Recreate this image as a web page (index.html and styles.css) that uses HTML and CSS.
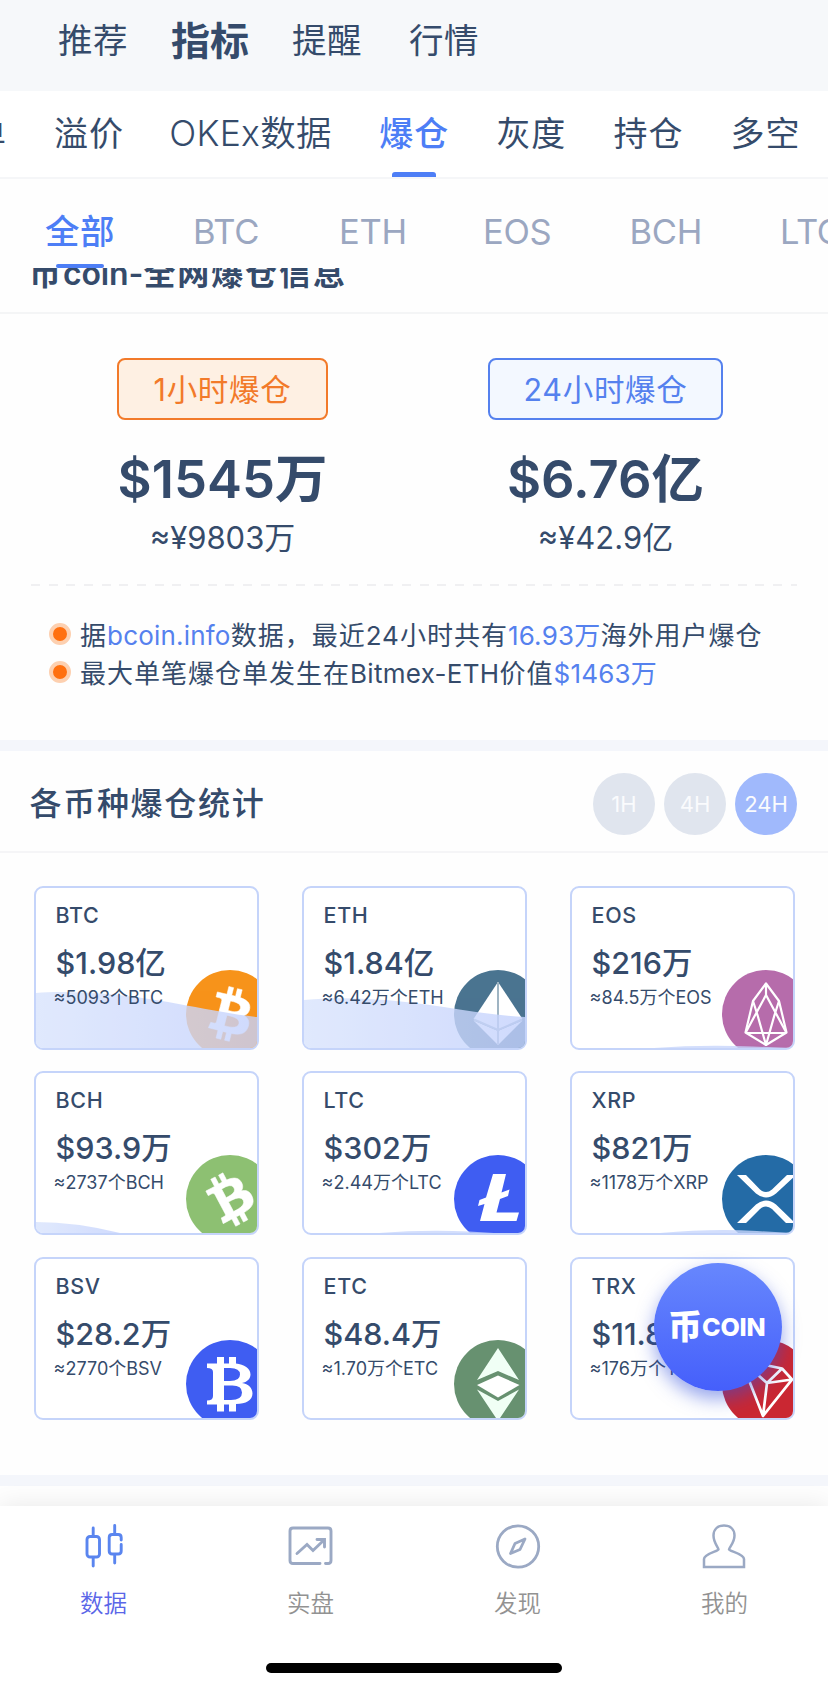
FILE: index.html
```html
<!DOCTYPE html>
<html lang="zh-CN">
<head>
<meta charset="utf-8">
<title>币coin</title>
<link rel="stylesheet" href="styles.css">
</head>
<body>
<svg class="defs" width="0" height="0">
  <defs>
    <linearGradient id="wave-fill" x1="0" x2="1"><stop offset="0" stop-color="#d9e4fd"/><stop offset=".5" stop-color="#cfdbfd"/><stop offset="1" stop-color="#c4d2fd"/></linearGradient>
    <path id="bitcoin" d="M23.189 14.02c.314-2.096-1.283-3.223-3.465-3.975l.708-2.84-1.728-.43-.69 2.765c-.454-.114-.92-.22-1.385-.326l.695-2.783L15.596 6l-.708 2.839c-.376-.086-.746-.17-1.104-.26l.002-.009-2.384-.595-.46 1.846s1.283.294 1.256.312c.7.175.826.638.805 1.006l-.806 3.235c.048.012.11.03.18.057l-.183-.045-1.13 4.532c-.086.212-.303.531-.793.41.018.025-1.256-.313-1.256-.313l-.858 1.978 2.25.561c.418.105.828.215 1.231.318l-.715 2.872 1.727.43.708-2.84c.472.127.93.245 1.378.357l-.706 2.828 1.728.43.715-2.866c2.948.558 5.164.333 6.097-2.333.752-2.146-.037-3.385-1.588-4.192 1.13-.26 1.98-1.003 2.207-2.538zm-3.95 5.538c-.533 2.147-4.148.986-5.32.695l.95-3.805c1.172.293 4.929.872 4.37 3.11zm.535-5.569c-.487 1.953-3.495.96-4.47.717l.86-3.45c.975.243 4.118.696 3.61 2.733z"/>
  </defs>
</svg>

<nav class="top-nav">
  <span>推荐</span><span class="on">指标</span><span>提醒</span><span>行情</span>
</nav>
<nav class="sub-nav">
  <span class="cut">单</span><span>溢价</span><span class="okex">OKEx数据</span><span class="on">爆仓</span><span>灰度</span><span>持仓</span><span>多空</span>
</nav>
<nav class="coin-nav">
  <span class="on">全部</span><span class="c-btc">BTC</span><span class="c-eth">ETH</span><span class="c-eos">EOS</span><span class="c-bch">BCH</span><span class="c-ltc">LTC</span>
</nav>

<main>
  <div class="clipped"><h2>币<span class="lat">coin-</span>全网爆仓信息</h2></div>

  <section class="summary">
    <div class="col">
      <span class="badge orange">1小时爆仓</span>
      <strong>$1545万</strong>
      <span class="cny">≈¥9803万</span>
    </div>
    <div class="col">
      <span class="badge blue">24小时爆仓</span>
      <strong>$6.76亿</strong>
      <span class="cny">≈¥42.9亿</span>
    </div>
  </section>
  <div class="dashes"></div>
  <ul class="notes">
    <li><i></i><span>据<b>bcoin.info</b>数据，最近24小时共有<b>16.93万</b>海外用户爆仓</span></li>
    <li><i></i><span>最大单笔爆仓单发生在<span class="lat">Bitmex-ETH</span>价值<b>$1463万</b></span></li>
  </ul>

  <div class="band"></div>
  <header class="stats-head">
    <h2>各币种爆仓统计</h2>
    <div class="periods"><span>1H</span><span>4H</span><span class="on">24H</span></div>
  </header>

  <section class="cards">
    <article>
      <svg class="coin" viewBox="0 0 88 88"><circle cx="44" cy="44" r="44" fill="#f7931a"/><use href="#bitcoin" transform="scale(2.75)" fill="#fff" stroke="#fff" stroke-width=".2"/></svg>
      <svg class="wave" viewBox="0 0 221 160"><path d="M0 105C20 103 45 104 72 106C130 111 175 124 221 129V160H0z" fill="url(#wave-fill)"/></svg>
      <h3>BTC</h3><strong>$1.98亿</strong><p>≈5093个BTC</p>
    </article>
    <article>
      <svg class="coin" viewBox="0 0 88 88"><circle cx="44" cy="44" r="44" fill="#4a7490"/><path d="M44 12 19.500 49 44 60 68.500 49z" fill="#fff"/><path d="M19.500 50.500 44 75 68.500 50.500 44 61z" fill="#fff"/><path d="M44 12V75M20 49.500 44 60 68 49.500" fill="none" stroke="#9fb5c3" stroke-width="2"/></svg>
      <svg class="wave" viewBox="0 0 221 160"><path d="M0 112C22 110 44 110 65 111C125 114 175 127 221 129V160H0z" fill="url(#wave-fill)"/></svg>
      <h3>ETH</h3><strong>$1.84亿</strong><p>≈6.42万个ETH</p>
    </article>
    <article>
      <svg class="coin" viewBox="0 0 88 88"><circle cx="44" cy="44" r="44" fill="#b66cab"/><g fill="none" stroke="#fff" stroke-width="2.200" stroke-linejoin="round"><path d="M44 13.500 31 31 23.500 62.500 44 75 64.500 62.500 57 31z"/><path d="M44 13.500V25M31 31 35.500 45M57 31 52.500 45M44 25 24 62M44 25 64 62M35.500 45 44 75 52.500 45M25 63H63"/></g></svg>
      <svg class="wave" viewBox="0 0 221 160"><path d="M82 160Q130 156.500 180 158.500L221 160z" fill="#c8d6fc"/></svg>
      <h3>EOS</h3><strong>$216万</strong><p>≈84.5万个EOS</p>
    </article>
    <article>
      <svg class="coin" viewBox="0 0 88 88"><circle cx="44" cy="44" r="44" fill="#8dc072"/><use href="#bitcoin" transform="rotate(-42 44 44) scale(2.75)" fill="#fff" stroke="#fff" stroke-width=".2"/></svg>
      <svg class="wave" viewBox="0 0 221 160"><path d="M0 149Q40 149 84 160H0z" fill="url(#wave-fill)"/></svg>
      <h3>BCH</h3><strong>$93.9万</strong><p>≈2737个BCH</p>
    </article>
    <article>
      <svg class="coin" viewBox="0 0 88 88"><circle cx="44" cy="44" r="44" fill="#3f5df2"/><path d="M39 19H52L47.500 37.500 55.500 34.500 54 41 46 44 42.500 57.500H65L62.500 66H26L30.500 49 24 51 25.500 45 32 42.500z" fill="#fff"/></svg>
      <svg class="wave" viewBox="0 0 221 160"><path d="M75 160Q120 156.500 165 158.500L190 160z" fill="#c8d6fc"/></svg>
      <h3>LTC</h3><strong>$302万</strong><p>≈2.44万个LTC</p>
    </article>
    <article>
      <svg class="coin" viewBox="0 0 88 88"><circle cx="44" cy="44" r="44" fill="#246ba6"/><path d="M15 20H24L38 34.500Q44 39.500 50 34.500L65 20H74L54 38.500Q44 46.500 34 38.500zM15 68H24L38 54Q44 49 50 54L64 68H73L54 49.500Q44 41.500 34 49.500z" fill="#fff"/></svg>
      <svg class="wave" viewBox="0 0 221 160"><path d="M88 160Q140 155.500 185 158L221 160z" fill="#c8d6fc"/></svg>
      <h3>XRP</h3><strong>$821万</strong><p>≈1178万个XRP</p>
    </article>
    <article>
      <svg class="coin" viewBox="0 0 88 88"><circle cx="44" cy="44" r="44" fill="#3f5df2"/><path fill="#fff" fill-rule="evenodd" d="M31 17H38V23.500H43V17H50V23.500C58 24.500 64.500 28 64.500 34.500C64.500 39 61 42 56 43C62.500 44 66.500 48 66.500 53.500C66.500 60 60 64 50 64V71.500H43V64.500H38V71.500H31V64.500H21V60.500Q27 60.500 27 56V32Q27 28 21 28V23.500H31zM38 28V41H44Q54 41 54 34.500T44 28zM38 45.500V60H45Q56 60 56 52.500T45 45.500z"/></svg>
      <h3>BSV</h3><strong>$28.2万</strong><p>≈2770个BSV</p>
    </article>
    <article>
      <svg class="coin" viewBox="0 0 88 88"><circle cx="44" cy="44" r="44" fill="#679170"/><path d="M44 8 65 40 44 31 23 40z" fill="#f0fff5"/><path d="M44 35.500 65.500 45 44 57.500 23 45z" fill="#fff"/><path d="M23 49.500 44 61 65 49.500 44 81z" fill="#f0fff5"/></svg>
      <h3>ETC</h3><strong>$48.4万</strong><p>≈1.70万个ETC</p>
    </article>
    <article>
      <svg class="coin" viewBox="0 0 88 88"><circle cx="44" cy="44" r="44" fill="#ca2732"/><path d="M19 20 60 28.500 70 39.500 41 76zM19 20 45 43 60 28.500M45 43 70 39.500M45 43 41 76" fill="none" stroke="#fff" stroke-width="2.700" stroke-linejoin="round"/></svg>
      <h3>TRX</h3><strong>$11.8万</strong><p>≈176万个TRX</p>
    </article>
  </section>
  <div class="band"></div>
</main>

<footer class="tab-bar">
  <div class="tabs">
    <div class="tab on">
      <svg viewBox="0 0 48 48" fill="none" stroke="#5a85ef" stroke-width="2.900" stroke-linecap="round"><rect x="7" y="13.500" width="12.500" height="20.500" rx="3"/><path d="M13.200 5v8M13.200 35v8M34.700 2.500v8M34.700 32v8M41.200 17v-2.500q0-3-3-3h-6q-3 0-3 3v13.500q0 3 3 3h6q3 0 3-3V21.500"/></svg>
      <span>数据</span>
    </div>
    <div class="tab">
      <svg viewBox="0 0 48 48" fill="none" stroke="#9ba9c4" stroke-width="2.900" stroke-linecap="round"><path d="M33 40.500H6q-3 0-3-3V8q0-3 3-3h35q3 0 3 3v29.500q0 3-3 3H38.500"/><path d="M10 30.500 20 21.500 26 27.500 37 17M30 16.500H37.500V24"/></svg>
      <span>实盘</span>
    </div>
    <div class="tab">
      <svg viewBox="0 0 48 48" fill="none" stroke="#9ba9c4" stroke-width="2.800"><circle cx="24" cy="23.500" r="20.700"/><path d="M31 16 21 20.500 16.500 30.500 26 26.500z" stroke-width="2.800" stroke-linejoin="round"/></svg>
      <span>发现</span>
    </div>
    <div class="tab">
      <svg viewBox="0 0 48 48" fill="none" stroke="#9ba9c4" stroke-width="2.500"><path d="M3 44V36C3 31 17.500 28 17.500 26.500C17.500 24.500 12.500 20 12.500 12.500C12.500 6 17 2.500 23 2.500S33.500 6 33.500 12.500C33.500 20 28 24.500 28 26.500C28 28 43 31 43 36V44z"/></svg>
      <span>我的</span>
    </div>
  </div>
  <div class="home-bar"></div>
</footer>

<div class="float-btn"><span class="bi">币</span><span class="coin-word">COIN</span></div>
</body>
</html>
```

FILE: styles.css
```css
* { box-sizing: border-box; margin: 0; padding: 0; }
body {
  width: 828px; height: 1682px; overflow: hidden; position: relative;
  display: flex; flex-direction: column;
  background: #fefefe; color: #354b6b;
  font-family: Inter, "Noto Sans CJK SC", sans-serif;
}
.defs { position: absolute; }
h2, h3, strong { font-weight: 500; }
nav { display: flex; flex: none; white-space: nowrap; font-weight: 390; }
nav span { flex: none; }

.top-nav { height: 91px; background: #f6f8fa; padding-left: 58px; font-size: 34.500px; letter-spacing: .5px; line-height: 81px; }
.top-nav span { width: 117px; }
.top-nav .on { font-size: 39px; font-weight: 700; letter-spacing: 0; margin-left: -4px; width: 121px; }

.sub-nav { height: 88px; border-bottom: 2px solid #f5f6f8; font-size: 34px; letter-spacing: 1px; line-height: 86px; margin-left: -28px; gap: 47.100px; background: #fff; }
.sub-nav .cut { margin-right: 0; width: 35px; }
.sub-nav .okex { width: 163px; margin-left: -2px; font-size: 35.500px; letter-spacing: .3px; font-weight: 360; }
.sub-nav .on, .coin-nav .on { color: #4d7ef6; font-weight: 500; display: flex; flex-direction: column; align-items: center; }
.sub-nav .on::after { content: ""; width: 44px; height: 5px; border-radius: 3px 3px 0 0; background: #4d7ef6; margin-top: -5px; }

.coin-nav { height: 89px; padding-left: 45px; font-size: 34.500px; line-height: 105px; color: #9ba7c1; letter-spacing: -.3px; background: #fefefe; overflow: hidden; }
.coin-nav .on { letter-spacing: .5px; width: 70px; }
.coin-nav .on::after { content: ""; width: 48px; height: 4.500px; border-radius: 3px; background: #4d7ef6; margin-top: -20.500px; }
.c-btc { margin-left: 78px; width: 146px; }
.c-eth { width: 144px; }
.c-eos { width: 146.500px; }
.c-bch { width: 150.500px; }

main { flex: none; height: 1218px; }
h2 { font-size: 32px; letter-spacing: 1.700px; }
.clipped { height: 46px; border-bottom: 2px solid #f4f5f6; overflow: hidden; display: flex; padding-left: 29px; }
.clipped h2 { line-height: 48px; margin-top: -18px; font-weight: 600; letter-spacing: 1.900px; }
.clipped .lat { letter-spacing: -.1px; }

.summary { height: 270px; padding: 44px 31px 0; display: grid; grid-template-columns: 1fr 1fr; }
.col { display: flex; flex-direction: column; align-items: center; }
.badge { height: 62px; line-height: 60px; border: 2px solid; border-radius: 8px; font-size: 30.500px; text-align: center; letter-spacing: .7px; font-weight: 390; }
.orange { width: 211px; color: #f27a2a; background: #fef0e3; }
.blue { width: 235px; color: #5581ee; background: #f3f8ff; }
.col strong { font-size: 52.500px; line-height: 62px; margin-top: 28px; font-weight: 600; }
.cny { font-size: 31px; line-height: 40px; margin-top: 8px; font-weight: 390; }
.dashes { height: 2px; margin: 0 31px; background: repeating-linear-gradient(90deg, #f0f0f2 0 9px, transparent 9px 17.670px); }

.notes { list-style: none; height: 154px; padding: 31px 0 0 49px; font-size: 26px; letter-spacing: 1px; white-space: nowrap; font-weight: 390; }
.notes li { display: flex; align-items: center; height: 37.500px; line-height: 37.500px; }
.notes i { width: 22px; height: 22px; border-radius: 50%; background: #ff7010; border: 4.500px solid #fdd0b0; margin: -3px 9px 0 0; }
.notes b { font-weight: 390; color: #5581ee; letter-spacing: .2px; }
.notes .lat { letter-spacing: .3px; }

.band { height: 11px; background: #f4f6fb; }
.stats-head { height: 102px; border-bottom: 2px solid #f5f5f7; padding: 1px 31px 0 29.500px; display: flex; align-items: center; justify-content: space-between; }
.stats-head h2 { margin-top: -1px; }
.periods { display: flex; gap: 9px; padding-top: 4px; }
.periods span { width: 62px; height: 62px; border-radius: 50%; background: #e0e5ee; color: #fafbfd; font-size: 22px; line-height: 62px; text-align: center; }
.periods .on { background: #a0b9fc; }

.cards { padding: 33px 33.600px 0; height: 622px; display: grid; grid-template-columns: repeat(3, 225px); grid-auto-rows: 163.500px; column-gap: 43px; row-gap: 21.800px; }
.cards article { position: relative; overflow: hidden; border: 2px solid #c5d4fa; border-radius: 9px; padding: 13px 0 0 19px; background: #fff; }
.cards h3, .cards strong, .cards p { position: relative; display: block; white-space: nowrap; }
.cards h3 { font-size: 21.500px; line-height: 28px; letter-spacing: .6px; margin-left: 1px; }
.cards strong { font-size: 30.500px; line-height: 40px; margin: 14px 0 0 1px; letter-spacing: 0; }
.cards p { font-size: 18px; line-height: 26px; margin: 2px 0 0 -1px; letter-spacing: 0; font-weight: 380; }
.coin { position: absolute; left: 150px; top: 81.500px; width: 88px; height: 88px; }
.wave { position: absolute; left: 0; top: -.5px; width: 221px; height: 160px; opacity: .8; }

.tab-bar { flex: 1; margin-top: 20px; background: #fff; box-shadow: 0 0 24px rgba(0, 0, 0, .09); display: flex; flex-direction: column; align-items: center; }
.tabs { width: 828px; height: 157px; display: grid; grid-template-columns: repeat(4, 1fr); }
.tab { display: flex; flex-direction: column; align-items: center; padding-top: 17px; font-size: 23.500px; color: #929292; font-weight: 350; }
.tab svg { width: 48px; height: 48px; }
.tab span { line-height: 32px; margin-top: 16.500px; }
.tab.on { color: #5a66e8; }
.home-bar { width: 296px; height: 10px; border-radius: 5px; background: #000; }

.float-btn { position: absolute; left: 654px; top: 1263px; width: 128px; height: 128px; border-radius: 50%; background: linear-gradient(#6787fd, #455ffb); box-shadow: 0 8px 18px rgba(50, 80, 220, .5); color: #fff; display: flex; align-items: center; padding-left: 14px; font-weight: 800; }
.bi { font-size: 34px; line-height: 40px; font-weight: 900; }
.coin-word { font-size: 25px; line-height: 40px; letter-spacing: -.2px; }
```
